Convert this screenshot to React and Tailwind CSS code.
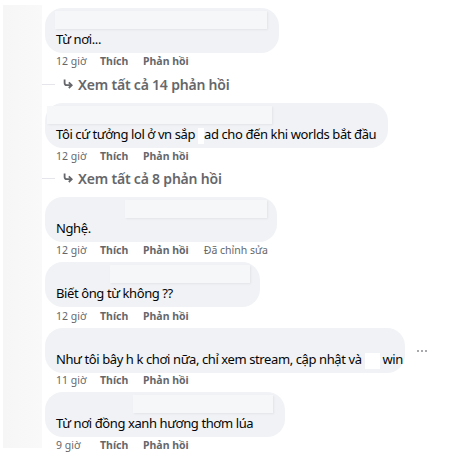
import React from "react";

const font = { fontFamily: '"Noto Sans", "Open Sans", sans-serif' };

const ReplyArrow = () => (
  <svg width="10" height="10" viewBox="0 0 10 10" className="mr-[5px]">
    <path d="M1.6 0.5 V4 Q1.6 6.2 3.8 6.2 H8.4" fill="none" stroke="#65676b" strokeWidth="1.8" />
    <path d="M5.8 3.4 L8.7 6.2 L5.8 9" fill="none" stroke="#65676b" strokeWidth="1.8" />
  </svg>
);

const Meta = ({ time, edited, className = "" }) => (
  <div className={`flex items-center h-[16px] pl-[11px] text-[10.5px] text-[#65676b] ${className}`}>
    <span className="w-[44px]">{time}</span>
    <span className="font-bold w-[43px]">Thích</span>
    <span className="font-bold">Phản hồi</span>
    {edited && <span className="ml-[15px]">Đã chỉnh sửa</span>}
  </div>
);

const ViewReplies = ({ count }) => (
  <div className="relative flex items-center h-[20px] pl-[18px] text-[14px] font-semibold text-[#65676b] tracking-[-0.2px]">
    <div className="absolute left-[-3px] top-[10px] w-[13px] h-px bg-[#e4e6eb]" />
    <ReplyArrow />
    <span>Xem tất cả {count} phản hồi</span>
  </div>
);

const Bubble = ({ width, nameOffset, nameWidth, children }) => (
  <div className={`${width} h-[45px] rounded-[18px] bg-[#f0f2f5] pt-[3px] pb-[4px]`}>
    <div className="h-[18px] flex">
      <div className={`${nameOffset} ${nameWidth} h-full bg-[#f6f7f9] shadow-[1px_1px_2px_rgba(0,0,0,0.06)]`} />
    </div>
    <div className="h-[20px] leading-[20px] pl-[11px] text-[13px] tracking-[-0.4px] text-[#050505] whitespace-nowrap">
      {children}
    </div>
  </div>
);

const Patch = ({ w }) => <span className={`inline-block ${w} h-[16px] align-middle bg-white`} />;

const Dots = () => (
  <div className="ml-[12px] flex gap-[2px]">
    <span className="w-[2px] h-[2px] rounded-full bg-[#8a8d91]" />
    <span className="w-[2px] h-[2px] rounded-full bg-[#8a8d91]" />
    <span className="w-[2px] h-[2px] rounded-full bg-[#8a8d91]" />
  </div>
);

export default function App() {
  return (
    <div className="w-[457px] h-[454px] bg-white flex overflow-hidden" style={font}>
      <div className="w-[39px] ml-[3px] mt-[5px] mb-[6px] bg-gradient-to-r from-[#f6f6f6] to-[#f9f9f9]" />
      <div className="flex flex-col pl-[3px] pt-[8px]">
        <Bubble width="w-[234px]" nameOffset="ml-[10px]" nameWidth="w-[212px]">
          Từ nơi...
        </Bubble>
        <Meta time="12 giờ" className="mt-[1px]" />
        <div className="mt-[4px]">
          <ViewReplies count={14} />
        </div>

        <div className="mt-[9px]">
          <Bubble width="w-[343px]" nameOffset="ml-[2px]" nameWidth="w-[225px]">
            Tôi cứ tưởng lol ở vn sắp <Patch w="w-[6px]" />ad cho đến khi worlds bắt đầu
          </Bubble>
        </div>
        <Meta time="12 giờ" className="mt-[1px]" />
        <div className="mt-[3px]">
          <ViewReplies count={8} />
        </div>

        <div className="mt-[9px]">
          <Bubble width="w-[232px]" nameOffset="ml-[80px]" nameWidth="w-[142px]">
            Nghệ.
          </Bubble>
        </div>
        <Meta time="12 giờ" edited className="mt-[1px]" />

        <div className="mt-[3px]">
          <Bubble width="w-[215px]" nameOffset="ml-[65px]" nameWidth="w-[140px]">
            Biết ông từ không ??
          </Bubble>
        </div>
        <Meta time="12 giờ" className="mt-[2px]" />

        <div className="mt-[3px] flex items-center">
          <Bubble width="w-[360px]" nameOffset="ml-[0px]" nameWidth="w-[0px]">
            Như tôi bây h k chơi nữa, chỉ xem stream, cập nhật và <Patch w="w-[15px]" /> win
          </Bubble>
          <Dots />
        </div>
        <Meta time="11 giờ" className="mt-[0px]" />

        <div className="mt-[3px]">
          <Bubble width="w-[240px]" nameOffset="ml-[88px]" nameWidth="w-[140px]">
            Từ nơi đồng xanh hương thơm lúa
          </Bubble>
        </div>
        <Meta time="9 giờ" className="mt-[1px]" />
      </div>
    </div>
  );
}
